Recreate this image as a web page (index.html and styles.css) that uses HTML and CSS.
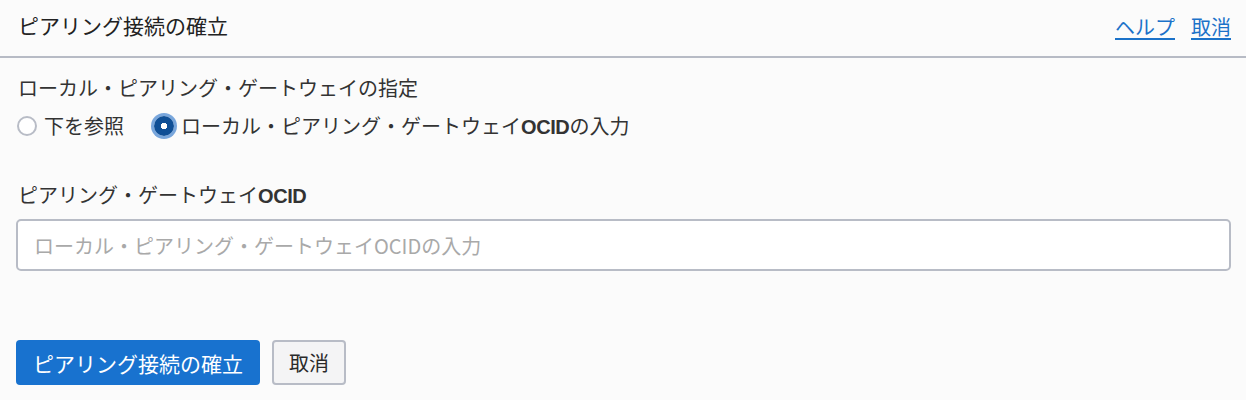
FILE: index.html
```html
<!DOCTYPE html>
<html lang="ja">
<head>
<meta charset="utf-8">
<title>ピアリング接続の確立</title>
<link rel="stylesheet" href="styles.css">
</head>
<body>
<div class="panel">
  <header class="header">
    <h1 class="title">ピアリング接続の確立</h1>
    <nav class="header-links">
      <a class="link" href="#">ヘルプ</a>
      <a class="link" href="#">取消</a>
    </nav>
  </header>
  <main class="content">
    <div class="field-label">ローカル・ピアリング・ゲートウェイの指定</div>
    <div class="radio-row">
      <label class="radio-item">
        <input class="radio" type="radio" name="mode">
        <span class="radio-text">下を参照</span>
      </label>
      <label class="radio-item">
        <input class="radio" type="radio" name="mode" checked>
        <span class="radio-text">ローカル・ピアリング・ゲートウェイ<span class="latin">OCID</span>の入力</span>
      </label>
    </div>
    <div class="field-label ocid-label">ピアリング・ゲートウェイ<span class="latin">OCID</span></div>
    <input class="text-input" type="text" placeholder="ローカル・ピアリング・ゲートウェイOCIDの入力">
    <div class="actions">
      <button class="btn btn-primary" type="button">ピアリング接続の確立</button>
      <button class="btn btn-secondary" type="button">取消</button>
    </div>
  </main>
</div>
</body>
</html>
```

FILE: styles.css
```css
* {
  box-sizing: border-box;
}

html, body {
  margin: 0;
  padding: 0;
  background: #fbfbfb;
}

body {
  font-family: "Noto Sans CJK JP", "Liberation Sans", sans-serif;
  color: #333333;
  font-size: 20px;
}

.latin {
  font-family: "Liberation Sans", "Noto Sans CJK JP", sans-serif;
  font-weight: 700;
  letter-spacing: -0.4px;
}

.header {
  height: 58px;
  border-bottom: 2px solid #b7bbc5;
  display: flex;
  justify-content: space-between;
  align-items: flex-start;
  padding: 0 15px 0 18px;
  background: #fbfbfb;
}

.title {
  margin: 11px 0 0 0;
  font-size: 21px;
  line-height: 28px;
  font-weight: 400;
  color: #222222;
}

.header-links {
  display: flex;
  gap: 16px;
  margin-top: 13px;
}

.link {
  font-size: 20px;
  line-height: 28px;
  color: #1b72c9;
  text-decoration: underline;
  text-underline-offset: 3px;
  text-decoration-thickness: 2px;
}

.content {
  padding: 0 15px 0 16px;
}

.field-label {
  margin-top: 16px;
  padding-left: 2px;
  font-size: 20px;
  line-height: 28px;
  color: #333333;
}

.radio-row {
  display: flex;
  gap: 30px;
  margin-top: 10px;
  padding-left: 1px;
  height: 28px;
  align-items: center;
}

.radio-item {
  display: flex;
  align-items: center;
  gap: 7px;
}

.radio {
  appearance: none;
  -webkit-appearance: none;
  margin: 0;
  width: 20px;
  height: 20px;
  border-radius: 50%;
  border: 2px solid #b8bcc6;
  background: #ffffff;
}

.radio:checked {
  border: none;
  background: radial-gradient(circle, #ffffff 0 3px, #0f4f96 3.5px);
  box-shadow: 0 0 0 3px #78a6dc;
}

.radio-text {
  font-size: 20px;
  line-height: 28px;
  color: #333333;
}

.ocid-label {
  margin-top: 41px;
}

.text-input {
  display: block;
  width: 100%;
  margin-top: 9px;
  height: 52px;
  border: 2px solid #b8bcc6;
  border-radius: 5px;
  background: #ffffff;
  padding: 0 16px;
  font-family: "Noto Sans CJK JP", "Liberation Sans", sans-serif;
  font-size: 20px;
  color: #333333;
  outline: none;
}

.text-input::placeholder {
  color: #a9a9a9;
}

.actions {
  display: flex;
  gap: 12px;
  margin-top: 69px;
}

.btn {
  height: 45px;
  font-family: "Noto Sans CJK JP", "Liberation Sans", sans-serif;
  font-size: 20px;
  line-height: 28px;
  border-radius: 4px;
  padding: 0 17px;
}

.btn-primary {
  background: #1872cf;
  color: #ffffff;
  border: none;
  font-size: 21px;
  padding: 0 17px;
}

.btn-secondary {
  background: #f4f4f5;
  color: #2a2a2a;
  border: 2px solid #b8bcc6;
  padding: 0 15px;
}
```
